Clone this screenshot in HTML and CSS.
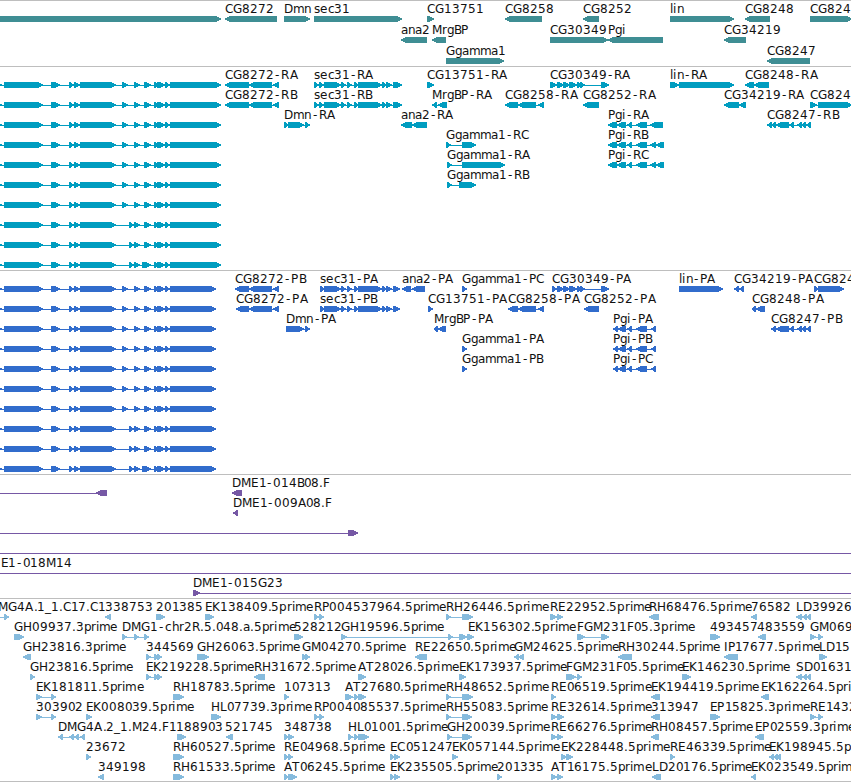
FILE: index.html
```html
<!DOCTYPE html>
<html lang="en">
<head>
<meta charset="utf-8">
<title>Genome browser</title>
<link rel="stylesheet" href="styles.css">
</head>
<body>
<main class="browser">
  <svg class="track genes" id="genes"></svg>
  <svg class="track transcripts" id="transcripts"></svg>
  <svg class="track proteins" id="proteins"></svg>
  <svg class="track clones" id="clones"></svg>
  <svg class="track ests" id="ests"></svg>
</main>
<script src="tracks.js"></script>
</body>
</html>
```
FILE: styles.css
```css
body {
  margin: 0;
  background: #fff;
  overflow: hidden;
}
.browser {
  display: flex;
  flex-direction: column;
  width: 851px;
  height: 782px;
  box-sizing: border-box;
  border-bottom: 1px solid #bebebe;
}
.track {
  display: block;
  flex: none;
  width: 851px;
  box-sizing: border-box;
  border-top: 1px solid #bebebe;
  overflow: hidden;
}
.track text {
  font: 12px "DejaVu Sans", sans-serif;
  fill: #111;
}
.track path {
  shape-rendering: crispEdges;
}
.genes { height: 66px; fill: #3f8e94; }
.transcripts { height: 204px; fill: #009dc0; }
.proteins { height: 204px; fill: #316ccc; }
.clones { height: 124px; fill: #7658a5; }
.ests { height: 183px; fill: #86bbdd; }
```
FILE: tracks.js
```javascript
// One feature per entry: "strand label@x start-end,start-end"; "_" means no label.
// Exons within a feature are joined by a one pixel backbone.
const common = '-4-2,4-43,51-60,69-74,74-80,80-116,';
const tail = '154-159,157-165,165-170,170-';
const longA = end => '+ _ ' + common + '122-128,134-140,144-151,' + tail + end;
const longB = end => '+ _ ' + common + '129-134,134-140,144-151,' + tail + end;
const longC = end => '+ _ ' + common + '129-134,134-140,142-151,' + tail + end;
const sec = (a, b) => a + ',324-341,341-346,347-352,354-358,358-382,382-387,386-392,393-' + b;
const cg30349 = '557-564,563-570,569-577,577-582,580-585,601-605,603-609';
const cg8247 = '776-789,789-794,797-802,802-806,806-811';
const pgi = '608-617,617-626,627-632,636-647,650-656,656-664';
const pgiP = '613-618,618-626,627-632,636-647,651-656';

const tracks = {
  genes: { origin: 1, height: 65, first: 16, step: 21, rows: [
    ['+ _ -9-221', '- CG8272 225-277', '+ Dmn 284-310', '+ sec31 314-402', '+ CG13751 427-434', '- CG8258 505-542', '- CG8252 583-599', '+ lin 670-734', '- CG8248 745-770', '+ CG8243 810-852'],
    ['- ana2 401-427', '- MrgBP 432-446', '+ CG30349 550-608', '- Pgi 608-663', '- CG34219 724-746'],
    ['+ Ggamma1 446-504', '- CG8247 767-810']
  ] },
  transcripts: { origin: 67, height: 203, first: 82, step: 20, rows: [
    [longA(221), '- CG8272-RA 225-249,249-272,273-279', '+ sec31-RA ' + sec('314-319,319-324', 402), '+ CG13751-RA 427-434', '+ CG30349-RA 550-557,' + cg30349, '+ lin-RA 670-679,679-734', '- CG8248-RA 745-754,754-769'],
    [longA(221), '- CG8272-RB 225-249,249-272,273-279', '+ sec31-RB ' + sec('314-319,319-324', 402), '- MrgBP-RA 432-437,438-447', '- CG8258-RA 505-518,518-536,538-544', '- CG8252-RA 583-599', '- CG34219-RA 724-739,739-746', '+ CG8243-RA 810-817,818-852'],
    [longA(221), '+ Dmn-RA 284-289,288-304,305-310', '- ana2-RA 401-412,412-427', '- Pgi-RA 608-617,617-626,627-632,636-647,650-663', '- CG8247-RB 767-772,772-776,' + cg8247],
    [longA(221), '+ Ggamma1-RC 446-451,462-476', '- Pgi-RB ' + pgi],
    [longA(221), '+ Ggamma1-RA 447-452,462-505', '- Pgi-RC ' + pgi],
    [longA(221), '+ Ggamma1-RB 447-452,459-476'],
    [longA(221)], [longB(221)], [longB(221)], [longC(221)]
  ] },
  proteins: { origin: 271, height: 203, first: 286, step: 20, rows: [
    [longA(216), '- CG8272-PB 235-249,249-272,273-279', '+ sec31-PA ' + sec('320-324', 400), '- ana2-PA 402-411,412-425', '+ Ggamma1-PC 462-467', '+ CG30349-PA 552-557,' + cg30349, '+ lin-PA 679-723', '- CG34219-PA 734-739,739-744', '+ CG8243-PA 814-818,818-844'],
    [longA(216), '- CG8272-PA 236-249,249-272,273-279', '+ sec31-PB ' + sec('320-324', 400), '+ CG13751-PA 428-433', '- CG8258-PA 508-518,518-536,538-544', '- CG8252-PA 584-599', '- CG8248-PA 752-756,756-765'],
    [longA(216), '+ Dmn-PA 286-304,305-310', '- MrgBP-PA 434-438,438-446', '- Pgi-PA ' + pgiP, '- CG8247-PB 771-776,' + cg8247],
    [longA(216), '+ Ggamma1-PA 462-467', '- Pgi-PB ' + pgiP],
    [longA(216), '+ Ggamma1-PB 462-467', '- Pgi-PC ' + pgiP],
    [longA(216)], [longA(216)], [longB(216)], [longB(216)], [longC(216)]
  ] },
  clones: { origin: 475, height: 123, first: 490, step: 20, rows: [
    ['- _ -20--10,96-107', '- DME1-014B08.F 232-242'],
    ['- DME1-009A08.F 233-238'],
    ['+ _ -20--10,348-358'],
    ['+ _ -20--10,870-880'],
    ['+ DME1-018M14@-18.5 -20--10,870-880'],
    ['+ DME1-015G23 193-200,870-880']
  ] },
  ests: { origin: 599, height: 182, first: 614, step: 20, rows: [
    ['+ DMG4A.1_1.C17.C1@-11 -9-0,4-9', '- 338753 105-111', '+ 201385 156-165', '+ EK138409.5prime 205-214', '+ RP004537964.5prime 314-319,319-324', '+ RH26446.5prime 446-451,462-473', '+ RE22952.5prime 550-557,557-563', '- RH68476.5prime 649-659', '- 76582 751-757', '- LD39926.5prime 796-802,802-807,806-811'],
    ['+ GH09937.3prime 14-24', '+ DMG1-chr2R.5.048.a.5prime 122-127,134-139,144-149', '+ 528212 294-303', '+ GH19596.5prime 341-347,448-453,459-467', '+ EK156302.5prime@468 467-474', '+ FGM231F05.3prime 577-585,601-609', '+ 493457 710-720', '- 483559@757 758-766', '+ GM06953.5prime 810-816,818-823'],
    ['- GH23816.3prime 23-31', '+ 344569 146-151,154-158,157-162', '+ GH26063.5prime 197-209', '+ GM04270.5prime 302-306,305-310', '- RE22650.5prime 415-427', '- GM24625.5prime 514-519,518-524', '- RH30244.5prime 618-632', '- IP17677.5prime 724-738', '+ LD15 819-827'],
    ['+ GH23816.5prime 30-35', '+ EK219228.5prime 146-151,154-158,157-162', '- RH31672.5prime 254-265', '+ AT28026.5prime 358-366', '+ EK173937.5prime 459-466', '+ FGM231F05.5prime 566-576,577-582', '+ EK146230.5prime 682-691', '- SD01631.5prime 796-802,802-807,806-811'],
    ['+ EK181811.5prime 36-42,51-56', '+ RH18783.5prime 173-184', '+ 107313 284-289', '+ AT27680.5prime 345-353,354-359,358-366', '+ RH48652.5prime 446-451,462-473', '+ RE06519.5prime 551-556', '- EK194419.5prime 651-660', '- EK162264.5prime 761-769'],
    ['+ 303902 36-42,51-56', '+ EK008039.5prime 86-92', '+ HL07739.3prime 211-221', '+ RP004085537.5prime 314-319,319-324', '+ RH55083.5prime 446-451,462-472', '+ RE32614.5prime 551-557,557-564', '- 313947 651-660', '+ EP15825.3prime 710-720', '+ RE14327.5prime 810-816,818-823'],
    ['- DMG4A.2_1.M24.F1 58-63,69-74,74-79,80-85', '+ 188903@176 177-186', '- 521745@225 226-233', '+ 348738 284-289,288-294', '+ HL01001.5prime 348-353,354-359,358-369', '+ GH20039.5prime 447-452,462-472', '+ RE66276.5prime 551-557,557-563', '- RH08457.5prime 651-659', '- EP02559.3prime 755-764'],
    ['+ 23672 86-91', '+ RH60527.5prime 173-184', '+ RE04968.5prime 284-289,288-293', '+ EC051247 390-395,394-400', '+ EK057144.5prime 452-458', '+ EK228448.5prime 561-567,566-573', '+ RE46339.5prime 670-675', '- EK198945.5prime 769-774,773-778,777-781'],
    ['- 349198 98-104', '+ RH61533.5prime 173-184', '+ AT06245.5prime 284-289,288-297', '+ EK235505.5prime 390-395,394-400', '+ 201335 497-502', '+ AT16175.5prime 551-557,557-563', '- LD20176.5prime 652-661', '- EK023549.5prime 751-756']
  ] }
};

// Horizontal advance of each label character, in pixels.
const advance = {
  '0': 7.7, '1': 7.7, '-': 7, '.': 3.8, '_': 6, A: 8.2, B: 7.2, C: 8.2, D: 8.9, E: 7.4, F: 6.8,
  G: 9.2, H: 9, I: 3.5, K: 7.8, L: 6.6, M: 10.2, P: 7.1, R: 8.2, S: 7.6, T: 7.4,
  a: 6.8, c: 6.6, e: 7.3, g: 7.2, h: 7.6, i: 3.3, l: 3.4, m: 11.1, n: 7.5, p: 7.5, r: 4.8, s: 6.3
};

function positions(label, x) {
  const result = [];
  let cursor = x;
  for (const ch of label) {
    result.push(Math.round(cursor + (ch === '-' ? 1 : 0)));
    cursor += advance[ch] || 8;
  }
  return result.join(' ');
}

const NS = 'http://www.w3.org/2000/svg';
function add(svg, tag, attrs, text) {
  const el = document.createElementNS(NS, tag);
  for (const key in attrs) el.setAttribute(key, attrs[key]);
  if (text) el.textContent = text;
  svg.appendChild(el);
}

function exonPath(a, b, y, forward) {
  const head = Math.min(6, b - a);
  return forward
    ? `M${a} ${y}H${b - head + 1}L${b} ${y + 2.5}V${y + 3.6}L${b - head + 1} ${y + 6}H${a}Z`
    : `M${b} ${y}H${a + head - 1}L${a} ${y + 2.5}V${y + 3.6}L${a + head - 1} ${y + 6}H${b}Z`;
}

for (const [id, track] of Object.entries(tracks)) {
  const svg = document.getElementById(id);
  svg.setAttribute('viewBox', `0 ${track.origin} 851 ${track.height}`);
  track.rows.forEach((row, index) => {
    const y = track.first + index * track.step;
    for (const feature of row) {
      const [strand, name, spans] = feature.split(' ');
      const exons = spans.split(',').map(s => s.match(/^(-?\d+)-(-?\d+)$/).slice(1).map(Number));
      const start = exons[0][0];
      const end = exons[exons.length - 1][1];
      if (exons.length > 1) add(svg, 'path', { d: `M${start + 1} ${y + 3}H${end - 1}v1H${start + 1}Z` });
      add(svg, 'path', { d: exons.map(([a, b]) => exonPath(a, b, y, strand === '+')).join('') });
      if (name !== '_') {
        const [label, x] = name.split('@');
        add(svg, 'text', { x: positions(label, x === undefined ? start : Number(x)), y: y - 3 }, label);
      }
    }
  });
}
```
